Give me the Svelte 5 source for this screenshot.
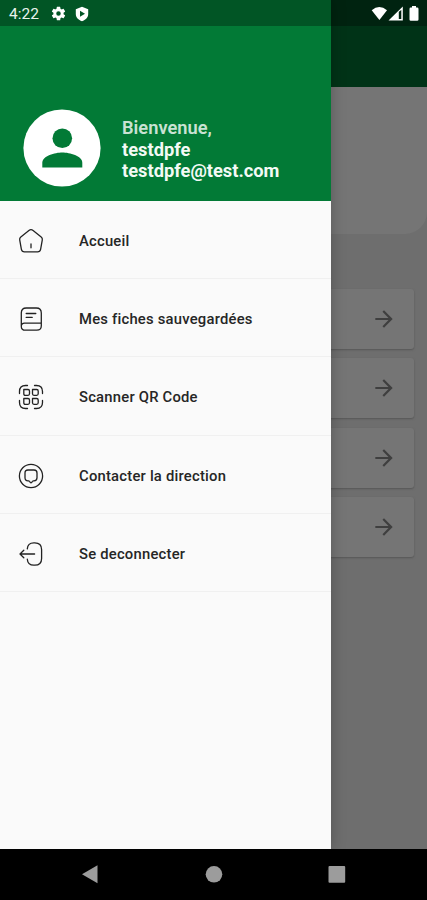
<script lang="ts">
   const user = {
      name: 'testdpfe',
      email: 'testdpfe@test.com'
   };

   const items = [
      { icon: 'home', label: 'Accueil' },
      { icon: 'book', label: 'Mes fiches sauvegardées' },
      { icon: 'qr', label: 'Scanner QR Code' },
      { icon: 'message', label: 'Contacter la direction' },
      { icon: 'logout', label: 'Se deconnecter' }
   ];

   const cards = [1, 2, 3, 4];
</script>

<div class="screen">
   <div class="page">
      <div class="appbar"></div>
      <div class="banner"></div>
      <div class="cards">
         {#each cards as card (card)}
            <div class="card">
               <svg viewBox="0 0 24 24" width="26" height="26">
                  <path d="M12 4l-1.41 1.41L16.17 11H4v2h12.17l-5.58 5.59L12 20l8-8z" />
               </svg>
            </div>
         {/each}
      </div>
   </div>

   <aside class="drawer">
      <header>
         <svg class="avatar" viewBox="0 0 78 78">
            <circle cx="39" cy="39" r="38.6" fill="#fff" />
            <circle cx="39.3" cy="29.3" r="9.8" />
            <path d="M19.300 58.500v-4.700C19.300 47 32 43.600 39.300 43.600s20 3.400 20 10.200v4.700z" />
         </svg>
         <div class="user">
            <span class="welcome">Bienvenue,</span>
            <span>{user.name}</span>
            <span>{user.email}</span>
         </div>
      </header>
      <nav>
         {#each items as item (item.icon)}
            <div class="item">
               <svg class="icon" viewBox="0 0 26 26">
                  {#if item.icon === 'home'}
                     <path d="M10.9 2.5 2.8 8.9Q1.4 10 1.7 11.8l1.7 9.5Q3.9 23.8 6.4 23.8h13.2q2.5 0 3-2.5l1.7-9.5q.3-1.8-1.1-2.9l-8.1-6.4Q13 .9 10.9 2.5zM13 16v3.8" />
                  {:else if item.icon === 'book'}
                     <path d="M3.3 20V7q0-5 5-5h10q5 0 5 5v10.2H6.5q-3.2 0-3.2 3.2 0 3.8 4.2 3.8h11.3q4.5 0 4.5-4.5V16M8.2 7.5h9.6M8.2 11.4h6" />
                  {:else if item.icon === 'qr'}
                     <path d="M1.5 9.5V7.5q0-6 6-6h2M16.5 1.5h2q6 0 6 6v2M24.5 16.5v2q0 6-6 6h-2M9.5 24.5h-2q-6 0-6-6v-2" />
                     <path d="M5.8 5.500H10q1.5 0 1.5 1.5v2.8q0 1.5-1.5 1.5H7.300q-1.500 0-1.500-1.500zM14.500 5.500h4.200q1.500 0 1.500 1.500v2.800q0 1.500-1.500 1.500H16q-1.500 0-1.500-1.500zM5.800 14.500H10q1.500 0 1.500 1.500v2.800q0 1.500-1.500 1.500H7.300q-1.500 0-1.500-1.500zM14.500 14.500h4.200q1.500 0 1.500 1.500v2.800q0 1.500-1.500 1.500H16q-1.500 0-1.500-1.500z" />
                  {:else if item.icon === 'message'}
                     <circle cx="13" cy="13" r="11.6" />
                     <path d="M10 7h6q3 0 3 3v4.800q0 3-3 3h-.6q-.5 0-.8.5l-.9 1.100q-.7.9-1.400 0l-.9-1.100q-.3-.5-.8-.5H10q-3 0-3-3V10q0-3 3-3z" />
                  {:else}
                     <path d="M9.3 7.9Q9.7 1.8 15.8 1.8h1q6.8 0 6.8 6.8v8.8q0 6.8-6.8 6.8h-1q-6 0-6.500-6M16.600 13H2.500M5.800 9.200 2 13l3.800 3.800" />
                  {/if}
               </svg>
               <span>{item.label}</span>
            </div>
         {/each}
      </nav>
   </aside>

   <div class="statusbar">
      <span class="time">4:22</span>
      <svg class="gear" viewBox="0 0 24 24" width="17" height="17">
         <path d="M19.14 12.94c.04-.3.06-.61.06-.94s-.02-.64-.07-.94l2.03-1.58a.49.49 0 0 0 .12-.61l-1.92-3.32a.49.49 0 0 0-.59-.22l-2.39.96a7 7 0 0 0-1.62-.94l-.36-2.54A.48.48 0 0 0 13.92 2.4h-3.84a.48.48 0 0 0-.47.41l-.36 2.54a7.4 7.4 0 0 0-1.62.94l-2.39-.96a.48.48 0 0 0-.59.22L2.74 8.87a.48.48 0 0 0 .12.61l2.03 1.58a6.2 6.2 0 0 0 0 1.88l-2.03 1.58a.49.49 0 0 0-.12.61l1.92 3.32c.12.22.37.29.59.22l2.39-.96c.5.38 1.03.7 1.62.94l.36 2.54c.05.24.24.41.48.41h3.84c.24 0 .44-.17.47-.41l.36-2.54a7 7 0 0 0 1.62-.94l2.39.96c.22.08.47 0 .59-.22l1.92-3.32a.48.48 0 0 0-.12-.61zM12 15.2a3.2 3.2 0 1 1 0-6.4 3.2 3.2 0 0 1 0 6.4z" />
      </svg>
      <svg class="shield" viewBox="0 0 14 16" width="14" height="16">
         <path d="M7 .8 13.2 3.3V8c0 3.5-2.6 6-6.2 7.2C3.4 14 .8 11.500.8 8V3.300zM5 4.800v5.900L10 7.700z" fill-rule="evenodd" />
      </svg>
      <svg class="signals" viewBox="0 0 50 18" width="50" height="18">
         <path d="M.7 5.2Q8.300-1 16 5.200L8.400 15z" />
         <path d="M31.800 1.400V15.600H17.500zM27.800 6.800v7.200h2.500V5z" fill-rule="evenodd" />
         <path d="M41 1h4v1.600h1.200q1.300 0 1.300 1.300v10.600q0 1.300-1.300 1.300h-6.400q-1.300 0-1.300-1.300V3.900q0-1.300 1.300-1.300H41z" />
      </svg>
   </div>

   <div class="navbar">
      <svg viewBox="0 0 427 50" width="427" height="50">
         <path d="M82 25.3 97.500 16.300V34.300z" />
         <circle cx="214" cy="25.3" r="8.3" />
         <rect x="328.5" y="17" width="16.700" height="16.700" rx="1" />
      </svg>
   </div>
</div>

<style>
   :global(body) {
      margin: 0;
      background: #000;
   }

   .screen {
      position: relative;
      display: flex;
      flex-direction: column;
      width: 427px;
      height: 900px;
      overflow: hidden;
      font-family: Roboto, sans-serif;
   }

   .page {
      flex: 1;
      background: #6e6e6e;
   }

   .appbar {
      height: 87px;
      background: #003317;
   }

   .banner {
      height: 147px;
      background: #757575;
      border-bottom-right-radius: 22px;
   }

   .cards {
      display: flex;
      flex-direction: column;
      gap: 9.4px;
      padding: 55px 13px 0;
   }

   .card {
      display: flex;
      align-items: center;
      justify-content: flex-end;
      height: 60px;
      padding-right: 17px;
      box-sizing: border-box;
      background: #757575;
      border-radius: 3px;
      box-shadow: 0 1px 2px #565656;
   }

   .card svg {
      fill: #3f3f3f;
   }

   .drawer {
      position: absolute;
      top: 0;
      left: 0;
      width: 331px;
      height: 849px;
      background: #fafafa;
      box-shadow: 0 0 14px rgba(0, 0, 0, 0.25);
   }

   header {
      display: flex;
      align-items: flex-end;
      height: 201px;
      padding: 0 0 14px 23px;
      box-sizing: border-box;
      background: #027a36;
   }

   .avatar {
      width: 78px;
      height: 78px;
      fill: #027a36;
   }

   .user {
      display: flex;
      flex-direction: column;
      margin: 0 0 5px 21px;
      color: #f3faf5;
      font-size: 18.3px;
      font-weight: 700;
      line-height: 21.6px;
   }

   .welcome {
      color: #c9e2d3;
      font-weight: 600;
   }

   .item {
      display: flex;
      align-items: center;
      height: 78.2px;
      box-sizing: border-box;
      padding: 3px 0 0 18px;
      border-bottom: 1px solid #f0f0f0;
      color: #262626;
      font-size: 14.8px;
      font-weight: 500;
      letter-spacing: 0.22px;
   }

   .icon {
      width: 26px;
      height: 26px;
      margin-right: 35px;
      fill: none;
      stroke: #222;
      stroke-width: 1.3;
      stroke-linecap: round;
      stroke-linejoin: round;
   }

   .statusbar {
      position: absolute;
      top: 0;
      left: 0;
      right: 0;
      display: flex;
      align-items: center;
      height: 26px;
      padding: 1px 6px 0 9px;
      box-sizing: border-box;
      background: rgba(0, 0, 0, 0.3);
      color: #e9f3ec;
      font-size: 15.5px;
   }

   .statusbar svg {
      fill: #fff;
   }

   .gear {
      margin-left: 11px;
   }

   .shield {
      margin-left: 8px;
   }

   .signals {
      margin-left: auto;
   }

   .navbar {
      height: 51px;
      background: #000;
   }

   .navbar svg {
      display: block;
      fill: #9c9c9c;
   }
</style>
